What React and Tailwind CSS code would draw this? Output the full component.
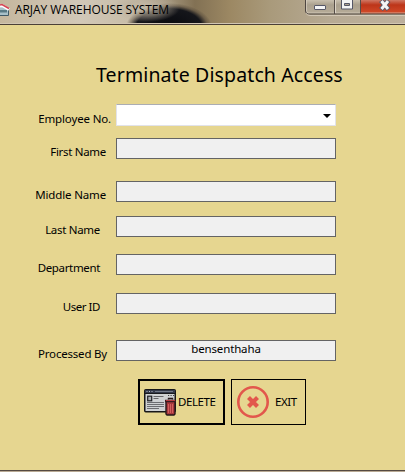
import React from "react";

const rows = [
  { label: "First Name", gap: "mt-[12px]", pad: "pr-[10px]", track: "tracking-[-0.3px]" },
  { label: "Middle Name", gap: "mt-[22px]", pad: "pr-[10px]", track: "tracking-[-0.15px]" },
  { label: "Last Name", gap: "mt-[14px]", pad: "pr-[16px]", track: "tracking-[-0.3px]" },
  { label: "Department", gap: "mt-[17px]", pad: "pr-[16px]", track: "tracking-[-0.35px]" },
  { label: "User ID", gap: "mt-[18px]", pad: "pr-[16px]", track: "tracking-[-0.45px]" },
  { label: "Processed By", gap: "mt-[26px]", pad: "pr-[9px]", track: "tracking-[-0.2px]", value: "bensenthaha" },
];

function HouseIcon() {
  return (
    <svg className="w-[10px] h-[18px] shrink-0" viewBox="0 0 10 18">
      <path d="M0 7h8v8.500H0z" fill="#a8c0c8" />
      <path d="M0 10h7v2.500H0z" fill="#587984" />
      <path d="M8.500 9v6.500H0" fill="none" stroke="#405a66" />
      <path d="M0 6.500l2-1 7 4" fill="none" stroke="#fff" strokeWidth="3" />
      <path d="M0 5l2-.5 7 4" fill="none" stroke="#d54252" strokeWidth="1.500" />
    </svg>
  );
}

function DeleteIcon() {
  return (
    <svg className="w-8 h-7 shrink-0" viewBox="0 0 32 28">
      <rect x=".75" y="1.750" width="30.500" height="22" rx="1" fill="#cfd1d3" stroke="#171719" strokeWidth="1.500" />
      <path d="M1 2h30v3.500H1z" fill="#34394a" />
      <path d="M2.500 3.500h1M5 3.500h1M7.500 3.500h1" stroke="#b4bac5" />
      <path d="M11 3.500h18" stroke="#707887" />
      <path d="M1 5.500h30" stroke="#18191c" />
      <rect x="3.700" y="8.200" width="4" height="4.600" fill="#a8abb0" stroke="#222226" strokeWidth="1.200" />
      <path d="M9.500 8.500h10M9.500 10.500h5" stroke="#66666a" />
      <path d="M24 7.500h1.200M26.500 7.500h1.200M29 7.500h1" stroke="#404045" />
      <path d="M3 14.500h17M3 16.500h17M3 18.500h17M3 20.500h12" stroke="#6c6d71" />
      <path d="M22 13h9v13l-1 1h-7l-1-1z" fill="#a8393d" stroke="#241719" strokeWidth="1.400" />
      <path d="M24.500 16v9M26.500 16v9M28.500 16v9" stroke="#df6b67" strokeWidth=".8" />
      <path d="M21 13h11" stroke="#3b1b20" strokeWidth="2.500" />
      <path d="M22 12.500h9" stroke="#b64043" />
      <path d="M24.500 11.500v-1h4v1" fill="none" stroke="#241719" strokeWidth="1.400" />
    </svg>
  );
}

function ExitIcon() {
  return (
    <svg className="w-8 h-8 shrink-0" viewBox="0 0 32 32" fill="none" stroke="#e2574c">
      <circle cx="16" cy="16" r="14.700" strokeWidth="2.600" />
      <path d="M11.500 11.500l9 9M20.500 11.500l-9 9" strokeWidth="4.200" />
    </svg>
  );
}

function WindowControls() {
  return (
    <svg className="ml-auto w-[101px] h-[17px] shrink-0" viewBox="0 0 101 17">
      <defs>
        <linearGradient id="glass" x2="0" y2="1">
          <stop offset="0" stopColor="#c8bfae" />
          <stop offset=".35" stopColor="#aaa08e" />
          <stop offset="1" stopColor="#b8ad99" />
        </linearGradient>
        <linearGradient id="close" x2="0" y2="1">
          <stop offset="0" stopColor="#cf7864" />
          <stop offset=".35" stopColor="#bd3519" />
          <stop offset="1" stopColor="#d44d2b" />
        </linearGradient>
      </defs>
      <path d="M1.500 0v11q0 3 3 3H101V0z" fill="url(#glass)" />
      <path d="M57 0h44v14H57z" fill="url(#close)" />
      <path d="M2.500 0v11q0 2 2 2H101" fill="none" stroke="#ddd4c5" strokeOpacity=".65" />
      <path d="M1.500 0v11q0 3 3 3H101" fill="none" stroke="#4e4641" />
      <path d="M2 13q1 2.500 4 2.500H101" fill="none" stroke="#dfd6c6" strokeOpacity=".7" />
      <path d="M30.500 0v14M56.500 0v14" stroke="#554d47" />
      <path d="M31.500 0v13" stroke="#ddd5c8" />
      <rect x="10.500" y="5.500" width="11" height="4" rx=".5" fill="#f4f4f4" stroke="#555767" />
      <path d="M37.500-1h11v10h-11zM40.500 3.500v2h5v-2z" fill="#f4f4f4" fillRule="evenodd" stroke="#555767" />
      <path d="M77 .5l7.500 9M84.500 .5l-7.500 9" stroke="#555767" strokeWidth="5" />
      <path d="M77.500 1l6.500 8M84 1l-6.500 8" stroke="#f4f4f4" strokeWidth="3" />
    </svg>
  );
}

export default function App() {
  return (
    <div className="flex h-[472px] w-[405px] flex-col overflow-hidden bg-[#e6d690] font-['Noto_Sans',sans-serif] text-xs text-black">
      <header className="flex h-[25px] shrink-0 items-start border-b border-[#4b4037] bg-[radial-gradient(ellipse_34px_14px_at_146px_8px,#c7bca9cc_0%,#b8ad9b88_55%,transparent_100%),radial-gradient(ellipse_43px_24px_at_169px_27px,#08090d_0%,#15161b_76%,#54493b88_90%,transparent_100%),linear-gradient(90deg,#c5b79e_0px,#d2c8b8_80px,#c5baa5_140px,#827154_195px,#9c8863_230px,#a99a7b_270px,#b7aa94_330px,#bdb09c_405px)] shadow-[inset_0_-1px_0_#d1c6b3]">
        <HouseIcon />
        <h1 className="ml-[5px] mt-[1px] whitespace-nowrap font-['Open_Sans',sans-serif] text-[12px] leading-[17px] tracking-[-0.07px]">ARJAY WAREHOUSE SYSTEM</h1>
        <WindowControls />
      </header>
      <main className="flex min-h-0 flex-1 flex-col">
        <h2 className="ml-[96px] mt-[36px] h-7 whitespace-nowrap text-[19.500px] leading-[27px] tracking-[0.12px]">Terminate Dispatch Access</h2>
        <div className="mt-[15px] flex h-[22px]">
          <label className="w-[116px] shrink-0 whitespace-nowrap pr-[5px] pt-[6px] text-right text-[11.5px] leading-[17px] tracking-[-0.15px]">Employee No.</label>
          <div className="flex w-[220px] items-center justify-end rounded-[1px] border border-[#e2e3ea] border-t-[#abadb3] bg-white pr-[4px] pt-[2px]">
            <svg className="h-1 w-[8px]" viewBox="0 0 8 4"><path d="M0 0h8L4 4z" /></svg>
          </div>
        </div>
        {rows.map((row) => (
          <div key={row.label} className={`flex h-[21px] shrink-0 ${row.gap}`}>
            <label className={`w-[116px] shrink-0 whitespace-nowrap pt-[5px] text-right text-[11.5px] leading-[17px] ${row.pad} ${row.track}`}>{row.label}</label>
            <div className="w-[220px] border border-[#646464] bg-[#f0f0f0] text-center text-[11.5px] leading-[16px] tracking-[-0.15px]">{row.value}</div>
          </div>
        ))}
        <div className="ml-[138px] mt-[18px] flex h-[46px] shrink-0 gap-[6px]">
          <button className="flex w-[87px] items-center border-2 border-black pl-[4px]">
            <DeleteIcon /><span className="ml-[2px] text-[11.5px] tracking-[-0.4px]">DELETE</span>
          </button>
          <button className="flex w-[75px] items-center border border-black pl-[5px]">
            <ExitIcon /><span className="ml-[6px] text-[11.5px] tracking-[-0.4px]">EXIT</span>
          </button>
        </div>
      </main>
      <div className="h-[2px] shrink-0 border-t border-[#554a42] bg-[#b9aa94]" />
    </div>
  );
}
